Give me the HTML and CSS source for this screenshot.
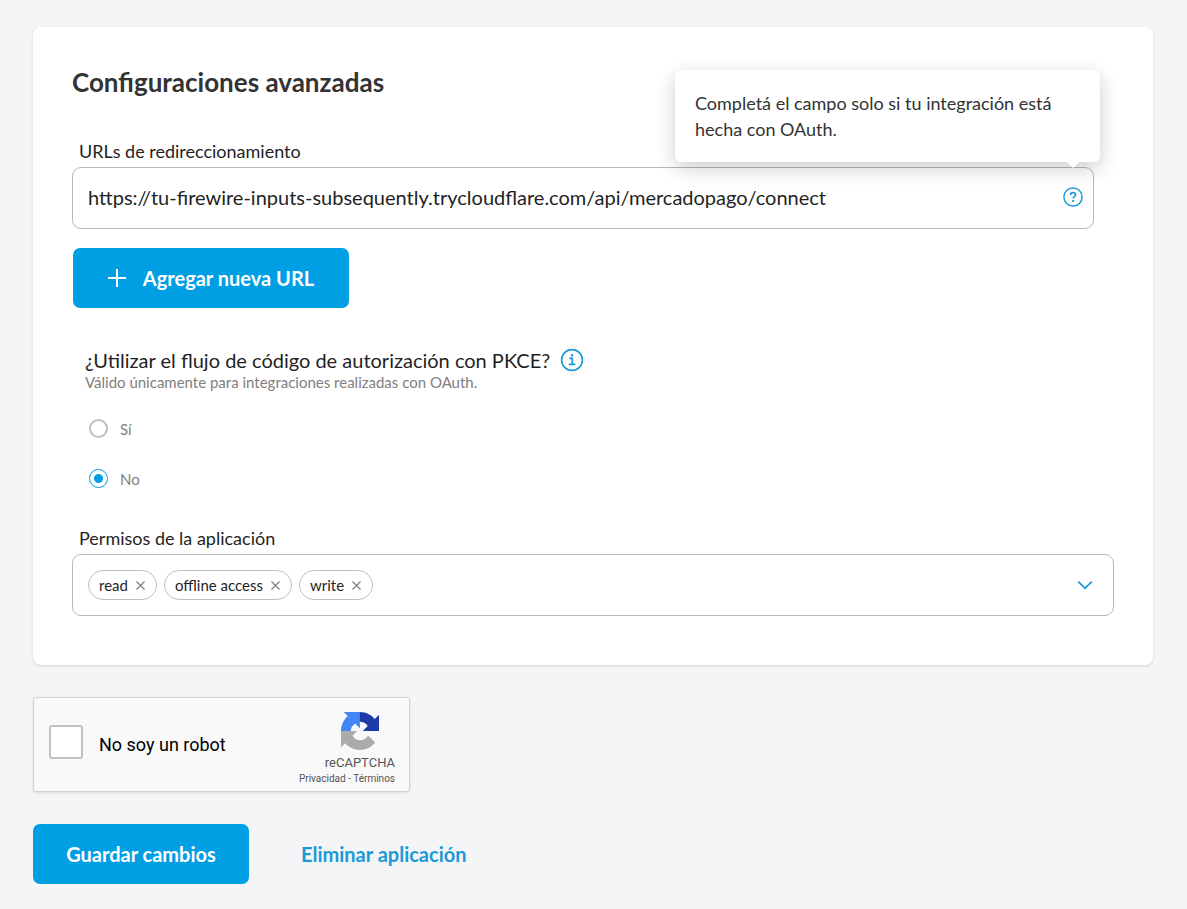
FILE: index.html
```html
<!DOCTYPE html>
<html lang="es">
<head>
<meta charset="utf-8">
<meta name="viewport" content="width=device-width, initial-scale=1">
<title>Configuraciones avanzadas</title>
<link rel="stylesheet" href="styles.css">
</head>
<body>
<form class="page">
  <section class="card">
    <h2 class="card-title">Configuraciones avanzadas</h2>

    <label class="label" for="redirect-url">URLs de redireccionamiento</label>
    <div class="box url-box">
      <input class="url-input" id="redirect-url" type="text" value="https://tu-firewire-inputs-subsequently.trycloudflare.com/api/mercadopago/connect">
      <button class="icon-button" type="button" aria-label="Ayuda" aria-describedby="url-tip">
        <svg width="20" height="20" viewBox="0 0 20 20" fill="none" stroke="currentColor">
          <circle cx="10" cy="10" r="9.1" stroke-width="1.5"/>
          <path d="M7.4 7.9C7.5 6.5 8.5 5.6 10 5.6c1.5 0 2.6.8 2.6 2.1 0 1.9-2.5 1.9-2.5 3.9" stroke-width="1.7"/>
          <path d="M10.1 13v1.9" stroke-width="1.9"/>
        </svg>
      </button>
      <div class="tooltip" id="url-tip" role="tooltip">Completá el campo solo si tu integración está hecha con OAuth.</div>
    </div>

    <button class="button button-add" type="button">
      <svg width="18" height="18" viewBox="0 0 18 18" fill="none" stroke="currentColor" stroke-width="2"><path d="M9 0v18M0 9h18"/></svg>
      Agregar nueva URL
    </button>

    <fieldset class="pkce">
      <legend class="question">¿Utilizar el flujo de código de autorización con PKCE?
        <svg width="24" height="24" viewBox="0 0 24 24" fill="none" stroke="currentColor">
          <circle cx="12" cy="12" r="10.4" stroke-width="1.6"/>
          <path d="M9.3 10.4h3v6M8.8 16.4h6.6" stroke-width="1.7"/>
          <path d="M12 6.2v2.3" stroke-width="2.3"/>
        </svg>
      </legend>
      <p class="hint">Válido únicamente para integraciones realizadas con OAuth.</p>
      <label class="option"><input class="radio" type="radio" name="pkce" value="si">Sí</label>
      <label class="option"><input class="radio" type="radio" name="pkce" value="no" checked>No</label>
    </fieldset>

    <div class="label" id="permissions-label">Permisos de la aplicación</div>
    <div class="box select-box" role="group" aria-labelledby="permissions-label">
      <span class="tag">read
        <button class="tag-remove" type="button" aria-label="Quitar read"><svg width="9" height="9" viewBox="0 0 9 9"><path d="M.5.5l8 8M8.5.5l-8 8"/></svg></button>
      </span>
      <span class="tag">offline access
        <button class="tag-remove" type="button" aria-label="Quitar offline access"><svg width="9" height="9" viewBox="0 0 9 9"><path d="M.5.5l8 8M8.5.5l-8 8"/></svg></button>
      </span>
      <span class="tag">write
        <button class="tag-remove" type="button" aria-label="Quitar write"><svg width="9" height="9" viewBox="0 0 9 9"><path d="M.5.5l8 8M8.5.5l-8 8"/></svg></button>
      </span>
      <button class="icon-button chevron" type="button" aria-label="Abrir permisos">
        <svg width="16" height="10" viewBox="0 0 16 10" fill="none" stroke="currentColor" stroke-width="1.7"><path d="M1.2 1.6L8 8.2l6.800-6.600"/></svg>
      </button>
    </div>
  </section>

  <div class="captcha">
    <label class="captcha-check"><input class="captcha-box" type="checkbox">No soy un robot</label>
    <div class="captcha-side">
      <div class="captcha-brand">
        <svg width="38" height="38" viewBox="0 0 64 64" aria-hidden="true">
          <path fill="#1c3aa9" d="M64 31.955l-.033-1.370V4.687l-7.160 7.160C50.948 4.674 42.033.093 32.050.093c-10.400 0-19.622 4.960-25.458 12.640l11.736 11.860a15.550 15.550 0 0 1 4.754-5.334c2.050-1.600 4.952-2.906 8.968-2.906.485 0 .860.057 1.135.163 4.976.393 9.288 3.140 11.828 7.124l-8.307 8.307L64 31.953"/>
          <path fill="#4285f4" d="M31.862.094l-1.370.033H4.594l7.160 7.160C4.580 13.147 0 22.060 0 32.046c0 10.400 4.960 19.622 12.640 25.458L24.500 45.768a15.550 15.550 0 0 1-5.334-4.754c-1.600-2.050-2.906-4.952-2.906-8.968 0-.485.057-.860.163-1.135.393-4.976 3.140-9.288 7.124-11.828l8.307 8.307L31.860.095"/>
          <path fill="#ababab" d="M.001 32.045l.033 1.370v25.898l7.160-7.160c5.860 7.173 14.774 11.754 24.760 11.754 10.400 0 19.622-4.960 25.458-12.640l-11.736-11.860a15.550 15.550 0 0 1-4.754 5.334c-2.050 1.600-4.952 2.906-8.968 2.906-.485 0-.860-.057-1.135-.163-4.976-.393-9.288-3.140-11.828-7.124l8.307-8.307c-10.522.040-22.400.066-27.295-.005"/>
        </svg>
        <span class="captcha-name">reCAPTCHA</span>
      </div>
      <div class="captcha-legal"><a href="#privacidad">Privacidad</a> - <a href="#terminos">Términos</a></div>
    </div>
  </div>

  <div class="actions">
    <button class="button" type="submit">Guardar cambios</button>
    <a class="link" href="#eliminar">Eliminar aplicación</a>
  </div>
</form>
</body>
</html>
```
FILE: styles.css
```css
* {
  box-sizing: border-box;
}

body {
  margin: 0;
  background: #f4f5f7;
  color: #1f1f1f;
  font-family: Lato, "Open Sans", sans-serif;
  font-size: 18px;
}

button,
input {
  font: inherit;
  color: inherit;
}

button {
  cursor: pointer;
}

svg {
  display: block;
  flex: none;
}

.page {
  display: flex;
  flex-direction: column;
  align-items: flex-start;
  gap: 32px;
  padding: 27px 34px 25px 33px;
}

.card {
  align-self: stretch;
  padding: 39px 39px 49px;
  background: #fff;
  border-radius: 8px;
  box-shadow: 0 1px 3px rgba(0, 0, 0, 0.14);
}

.card-title {
  margin: 0 0 41px;
  color: #333;
  font-size: 26px;
  font-weight: 700;
  line-height: 32px;
}

.label {
  display: block;
  margin: 0 0 4px 7px;
  line-height: 24px;
}

.box {
  display: flex;
  align-items: center;
  min-height: 62px;
  border: 1px solid #b8b8b8;
  border-radius: 9px;
  background: #fff;
}

.url-box {
  position: relative;
  margin-right: 20px;
  padding: 0 10px 2px 15px;
}

.url-input {
  flex: 1;
  min-width: 0;
  padding: 0;
  border: 0;
  outline: 0;
  background: none;
  font-size: 20px;
  line-height: 28px;
}

.icon-button {
  padding: 0;
  border: 0;
  background: none;
  color: #1c9ad6;
}

.tooltip {
  position: absolute;
  right: -7px;
  bottom: calc(100% + 6px);
  width: 425px;
  padding: 20px;
  border-radius: 6px;
  background: #fff;
  box-shadow: 0 6px 20px rgba(0, 0, 0, 0.2);
  color: #333;
  line-height: 26px;
}

.tooltip::after {
  content: "";
  position: absolute;
  top: 100%;
  right: 21px;
  border: 6px solid transparent;
  border-top-color: #fff;
  border-bottom: 0;
}

.button {
  display: inline-flex;
  align-items: center;
  justify-content: center;
  min-width: 216px;
  height: 60px;
  padding: 0 31px;
  border: 0;
  border-radius: 7px;
  background: #009ee3;
  color: #fff;
  font-size: 20px;
  font-weight: 700;
}

.button-add {
  min-width: 276px;
  margin: 19px 0 0 1px;
  gap: 17px;
}

.pkce {
  margin: 40px 0 37px;
  padding: 0 0 0 13px;
  border: 0;
}

.question {
  display: flex;
  align-items: center;
  gap: 10px;
  padding: 0;
  font-size: 20px;
  line-height: 24px;
}

.question svg {
  color: #1c9ad6;
}

.hint {
  margin: 0 0 27px;
  color: #808080;
  font-size: 15px;
  line-height: 20px;
}

.option {
  display: flex;
  align-items: center;
  gap: 12px;
  width: max-content;
  margin-left: 4px;
  color: #808080;
  font-size: 15px;
  line-height: 20px;
}

.option + .option {
  margin-top: 30px;
}

.radio {
  appearance: none;
  width: 19px;
  height: 19px;
  margin: 0 0 1px;
  border: 2px solid #bfbfbf;
  border-radius: 50%;
  background: #fff;
}

.radio:checked {
  border: 1px solid #009ee3;
  background: radial-gradient(circle, #009ee3 4px, #fff 5px);
}

.select-box {
  gap: 7px;
  padding: 0 20px 0 15px;
}

.tag {
  display: flex;
  align-items: center;
  gap: 8px;
  height: 30px;
  padding: 0 11px 0 10px;
  border: 1px solid #bfbfbf;
  border-radius: 15px;
  font-size: 15px;
}

.tag-remove {
  padding: 0;
  border: 0;
  background: none;
}

.tag-remove path {
  fill: none;
  stroke: #808080;
  stroke-width: 1.2;
}

.chevron {
  margin-left: auto;
}

.captcha {
  display: flex;
  justify-content: space-between;
  width: 377px;
  height: 95px;
  padding: 0 14px 0 15px;
  border: 1px solid #d3d3d3;
  border-radius: 3px;
  background: #f9f9f9;
  box-shadow: 0 1px 3px rgba(0, 0, 0, 0.1);
  color: #000;
  font-family: Roboto, sans-serif;
}

.captcha-check {
  display: flex;
  align-items: center;
  gap: 16px;
}

.captcha-box {
  appearance: none;
  width: 34px;
  height: 34px;
  margin: 0 0 5px;
  border: 2px solid #c1c1c1;
  border-radius: 3px;
  background: #fff;
}

.captcha-side {
  display: flex;
  flex-direction: column;
  align-items: flex-end;
  padding-top: 14px;
  color: #555;
}

.captcha-brand {
  display: flex;
  flex-direction: column;
  align-items: center;
}

.captcha-name {
  margin-top: 5px;
  font-size: 13px;
  line-height: 16px;
}

.captcha-legal {
  font-size: 10px;
  line-height: 16px;
}

.captcha-legal a {
  color: inherit;
  text-decoration: none;
}

.actions {
  display: flex;
  align-items: center;
  gap: 52px;
}

.link {
  color: #1c9ad6;
  font-size: 20px;
  font-weight: 700;
  text-decoration: none;
}
```
